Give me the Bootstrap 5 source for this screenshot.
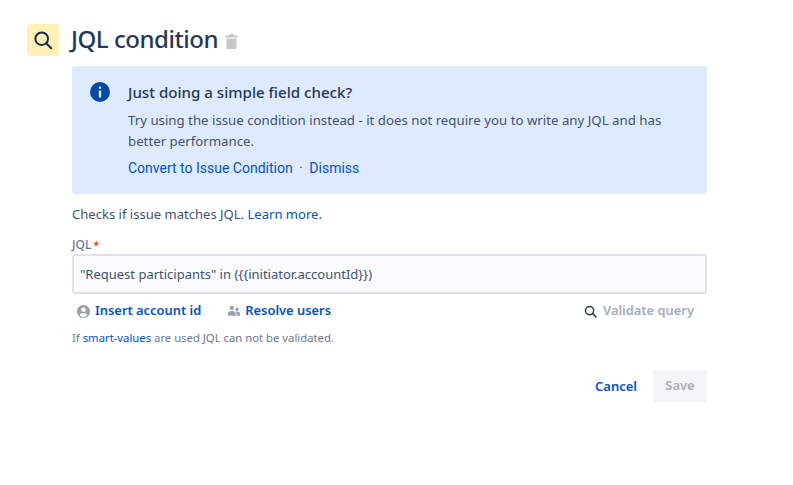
<!DOCTYPE html>
<html lang="en"><head><meta charset="utf-8"><title>JQL condition</title>
<link href="https://cdn.jsdelivr.net/npm/bootstrap@5.3.0/dist/css/bootstrap.min.css" rel="stylesheet">
<style>
html,body{background:#fff}
body{font-family:"Noto Sans",sans-serif;font-size:13px;color:#42526e;width:793px;height:485px;overflow:hidden}
a{color:#0052cc;text-decoration:none}
.shell{padding:24px 86px 0 27px}
.tile{width:32px;height:32px;background:#fff0b3;border-radius:3px;color:#172b4d}
.heading{font-size:24px;line-height:30px;font-weight:500;color:#253858;margin:0 0 2px 12px;letter-spacing:-.46px}
.trash{margin:2px 0 0 7px;color:#c8c8c8}
.body-col{margin-left:45px;width:635px}
.notice{background:#deebff;border-radius:3px;padding:16px 18px;margin-top:10px;height:128px}
.notice-main{margin-left:18px}
.notice h2{font-size:15.100px;line-height:20px;font-weight:500;color:#253858;margin:0}
.notice p{font-size:13.250px;line-height:21px;margin:8px 0 0;color:#42526e}
.notice-links{font-family:"Roboto",sans-serif;font-size:14px;line-height:20px;margin-top:6px}
.sep{margin:0 6.500px;color:#42526e}
.intro{margin:10px 0 0;line-height:20px;font-size:13.050px}
.lbl{font-size:12px;line-height:16px;margin-top:13px;color:#6b778c;font-weight:500}
.lbl span{color:#de350b;margin-left:2px;font-size:11px}
.jql-box{height:40px;margin-top:1px;background:#fafbfc;border:2px solid #dfe1e6;border-radius:3px;padding:0 6px;font-size:13px;line-height:36px;color:#42526e}
.tools{height:34px;font-weight:600;font-size:12.900px}
.tools .ic{color:#97a0af}
.gap-people{margin-left:26px}
.mute{color:#a5adba;font-size:12.900px;margin:0 13px 0 6px}
.hint{font-size:11.300px;line-height:16px;color:#6b778c;margin-top:2px}
.act{margin-top:24px;gap:16px;font-weight:600;font-size:13px}
.act a{padding-top:2px}
.save-btn{width:54px;height:32px;background:#f4f5f7;border-radius:3px;color:#a5adba}
</style></head><body>
<div class="shell">
 <div class="d-flex align-items-center">
  <div class="tile d-flex align-items-center justify-content-center"><svg width="20" height="20" viewBox="0 0 20 20" fill="none" stroke="currentColor" stroke-width="2"><circle cx="8.700" cy="8.700" r="6.300"/><path d="M13.200 13.200l5 5" stroke-linecap="round"/></svg></div>
  <h1 class="heading">JQL condition</h1>
  <svg class="trash" width="13" height="15" viewBox="0 0 13 15" fill="currentColor"><path d="M4.500 0h4l.6 1.500H12.500V3.500H.5V1.500H3.900zM1.500 4.500h10v9a1.500 1.500 0 0 1-1.500 1.500H3a1.500 1.500 0 0 1-1.500-1.500z"/></svg>
 </div>
 <div class="body-col">
  <div class="notice d-flex">
   <svg class="flex-shrink-0" width="20" height="20" viewBox="0 0 20 20"><circle cx="10" cy="10" r="10" fill="#0747a6"/><rect x="8.800" y="4.500" width="2.400" height="2.400" rx="1.200" fill="#deebff"/><rect x="8.800" y="8.500" width="2.400" height="7" rx=".6" fill="#deebff"/></svg>
   <div class="notice-main">
    <h2>Just doing a simple field check?</h2>
    <p>Try using the issue condition instead - it does not require you to write any JQL and has better performance.</p>
    <div class="notice-links"><a href="#">Convert to Issue Condition</a><span class="sep">·</span><a href="#">Dismiss</a></div>
   </div>
  </div>
  <p class="intro">Checks if issue matches JQL. <a href="#">Learn more.</a></p>
  <div class="lbl">JQL<span>*</span></div>
  <div class="jql-box">"Request participants" in ({{initiator.accountId}})</div>
  <div class="tools d-flex align-items-center">
   <svg class="ic ms-1" width="15" height="15" viewBox="0 0 16 16" fill="currentColor"><path fill-rule="evenodd" d="M8 1a7 7 0 1 1 0 14A7 7 0 0 1 8 1zm0 2.600a2.500 2.500 0 1 0 0 5 2.500 2.500 0 0 0 0-5zM3.800 11.800A5.200 5.200 0 0 0 8 14a5.200 5.200 0 0 0 4.200-2.200C11.600 10.500 10 9.700 8 9.700s-3.600.8-4.200 2.100z"/></svg>
   <a href="#" class="ms-1">Insert account id</a>
   <svg class="ic gap-people" width="14" height="12" viewBox="0 0 16 14" fill="currentColor"><circle cx="5.500" cy="3.500" r="2.500"/><circle cx="11.500" cy="5" r="2"/><path d="M1 12.500V10c0-1.700 1.800-3 4.500-3s4.500 1.300 4.500 3v2.500zM11 12.500V10c0-1-.4-1.700-.9-2.400.4-.1.900-.1 1.400-.1 2 0 3.500.9 3.500 2.400v2.600z"/></svg>
   <a href="#" class="ms-1">Resolve users</a>
   <svg class="ms-auto" width="13" height="13" viewBox="0 0 14 14" fill="none" stroke="#253858" stroke-width="1.600"><circle cx="6" cy="6" r="4.400"/><path d="M9.200 9.200l3.600 3.600" stroke-linecap="round"/></svg>
   <span class="mute">Validate query</span>
  </div>
  <div class="hint">If <a href="#">smart-values</a> are used JQL can not be validated.</div>
  <div class="act d-flex justify-content-end align-items-center">
   <a href="#">Cancel</a>
   <div class="save-btn d-flex align-items-center justify-content-center">Save</div>
  </div>
 </div>
</div>
<script src="https://cdn.jsdelivr.net/npm/bootstrap@5.3.0/dist/js/bootstrap.bundle.min.js"></script>
</body></html>
